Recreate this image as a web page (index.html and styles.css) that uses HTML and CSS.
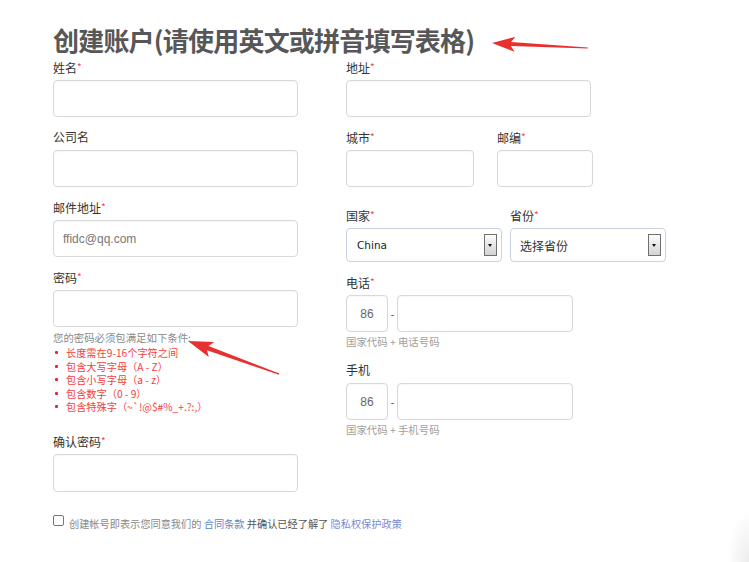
FILE: index.html
```html
<!DOCTYPE html>
<html lang="zh">
<head>
<meta charset="utf-8">
<title>创建账户</title>
<link rel="stylesheet" href="styles.css">
</head>
<body>
<div class="page">
  <h1 class="title">创建账户(请使用英文或拼音填写表格)</h1>
  <div class="cols">
    <div class="col col-left">
      <div class="field">
        <label class="lbl">姓名<i>*</i></label>
        <div class="inp w245"></div>
      </div>
      <div class="field">
        <label class="lbl">公司名</label>
        <div class="inp w245"></div>
      </div>
      <div class="field">
        <label class="lbl">邮件地址<i>*</i></label>
        <div class="inp w245 val">ffidc@qq.com</div>
      </div>
      <div class="field pw">
        <label class="lbl">密码<i>*</i></label>
        <div class="inp w245"></div>
        <div class="pw-hint">您的密码必须包满足如下条件:</div>
        <ul class="rules">
          <li>长度需在9-16个字符之间</li>
          <li>包含大写字母（A - Z）</li>
          <li>包含小写字母（a - z）</li>
          <li>包含数字（0 - 9）</li>
          <li>包含特殊字（~`!@$#%_+.?:,）</li>
        </ul>
      </div>
      <div class="field confirm">
        <label class="lbl">确认密码<i>*</i></label>
        <div class="inp w245 tall"></div>
      </div>
    </div>
    <div class="col col-right">
      <div class="field">
        <label class="lbl">地址<i>*</i></label>
        <div class="inp w245"></div>
      </div>
      <div class="row row-city">
        <div class="field">
          <label class="lbl">城市<i>*</i></label>
          <div class="inp w128"></div>
        </div>
        <div class="field">
          <label class="lbl">邮编<i>*</i></label>
          <div class="inp w96"></div>
        </div>
      </div>
      <div class="row row-country">
        <div class="field">
          <label class="lbl">国家<i>*</i></label>
          <div class="sel"><span class="sel-text latin">China</span><span class="sel-btn"></span></div>
        </div>
        <div class="field">
          <label class="lbl">省份<i>*</i></label>
          <div class="sel"><span class="sel-text">选择省份</span><span class="sel-btn"></span></div>
        </div>
      </div>
      <div class="field phone">
        <label class="lbl">电话<i>*</i></label>
        <div class="tel">
          <div class="inp code">86</div>
          <span class="dash">-</span>
          <div class="inp w176"></div>
        </div>
        <div class="sub-hint">国家代码 + 电话号码</div>
      </div>
      <div class="field phone mobile">
        <label class="lbl">手机</label>
        <div class="tel">
          <div class="inp code">86</div>
          <span class="dash">-</span>
          <div class="inp w176"></div>
        </div>
        <div class="sub-hint">国家代码 + 手机号码</div>
      </div>
    </div>
  </div>
  <div class="agree">
    <span class="check"></span>
    <span class="agree-text">创建帐号即表示您同意我们的 <a class="lnk">合同条款</a> <span class="dark">并确认已经了解了</span> <a class="lnk lnk2">隐私权保护政策</a></span>
  </div>
  <svg class="arrows" width="749" height="562" viewBox="0 0 749 562">
    <polygon fill="#e8312f" transform="translate(492,43) rotate(3)" points="0,0 23,-7.5 19,-2 96,-0.6 96,0.6 19,2 23,7.5"/>
    <polygon fill="#e8312f" transform="translate(188,341) rotate(20)" points="0,0 25,-8 21,-2.2 97,-0.6 97,0.6 21,2.2 25,8"/>
  </svg>
</div>
</body>
</html>
```

FILE: styles.css
```css
* { box-sizing: border-box; }
html, body { margin: 0; padding: 0; }
body {
  width: 749px;
  height: 562px;
  overflow: hidden;
  background: radial-gradient(ellipse 22px 50px at 100% 100%, #ececec 0%, rgba(255,255,255,0) 100%), #fff;
  font-family: "Noto Sans CJK SC", "Noto Sans", sans-serif;
  color: #333;
}
.page {
  position: relative;
  width: 749px;
  height: 562px;
  padding-left: 53px;
}
.title {
  margin: 0;
  padding-top: 22px;
  height: 58px;
  font-size: 26px;
  line-height: 36px;
  font-weight: 700;
  color: #575757;
  letter-spacing: -0.8px;
}
.cols {
  display: flex;
  gap: 48px;
}
.col { display: flex; flex-direction: column; }
.col-left { width: 245px; }
.field { display: flex; flex-direction: column; }
.col-left > .field + .field { margin-top: 11px; }
.lbl {
  font-size: 12px;
  line-height: 18px;
  height: 18px;
  margin-bottom: 4px;
  color: #333;
}
.lbl i {
  font-style: normal;
  color: #f0454a;
  font-size: 10px;
  vertical-align: 2px;
}
.inp {
  height: 37px;
  border: 1px solid #d8d8d8;
  border-radius: 4px;
  background: #fff;
  box-shadow: inset 0 1px 2px rgba(0,0,0,0.04);
}
.inp.tall { height: 38px; }
.w245 { width: 245px; }
.w128 { width: 128px; }
.w96 { width: 96px; }
.w176 { width: 176px; }
.val {
  font-family: "Liberation Sans", Arial, sans-serif;
  font-size: 12px;
  color: #777;
  display: flex;
  align-items: center;
  padding-left: 9px;
  padding-top: 1px;
}
.pw-hint {
  margin-top: 4px;
  font-size: 10.4px;
  line-height: 14px;
  color: #8a8a8a;
}
.rules {
  list-style: none;
  margin: 0;
  padding: 1px 0 0 13px;
}
.rules li {
  position: relative;
  font-size: 10.2px;
  line-height: 13.5px;
  color: #f2413f;
}
.rules li::before {
  content: "";
  position: absolute;
  left: -11px;
  top: 5px;
  width: 3px;
  height: 3px;
  background: #e8252a;
  border-radius: 1px;
}
.col-left > .field.confirm { margin-top: 18px; }

.row { display: flex; }
.row-city { margin-top: 11px; gap: 23px; }
.row-country { margin-top: 19px; gap: 8px; }
.sel {
  position: relative;
  width: 156px;
  height: 34px;
  border: 1px solid #c8d2e2;
  border-radius: 4px;
  background: #fff;
  display: flex;
  align-items: center;
  padding-left: 9px;
}
.sel-text {
  font-size: 12px;
  color: #333;
}
.sel-text.latin {
  font-family: "DejaVu Sans", Verdana, sans-serif;
  font-size: 10.5px;
  color: #222;
  padding-left: 1px;
}
.sel-btn {
  position: absolute;
  right: 4px;
  top: 5px;
  width: 13px;
  height: 22px;
  border: 1px solid #6f6f6f;
  background: linear-gradient(#fdfdfd, #d2d2d2);
}
.sel-btn::after {
  content: "";
  position: absolute;
  left: 3px;
  top: 9px;
  border-left: 2.5px solid transparent;
  border-right: 2.5px solid transparent;
  border-top: 3px solid #111;
}
.phone { margin-top: 11px; }
.phone.mobile { margin-top: 12px; }
.tel { display: flex; align-items: center; }
.code {
  width: 42px;
  display: flex;
  align-items: center;
  justify-content: center;
  font-family: "Liberation Sans", Arial, sans-serif;
  font-size: 12px;
  color: #666;
}
.dash {
  width: 9px;
  text-align: center;
  font-family: "Liberation Sans", Arial, sans-serif;
  font-size: 11px;
  color: #555;
}
.sub-hint {
  margin-top: 3px;
  font-size: 10.4px;
  line-height: 14px;
  color: #a0a0a0;
}
.agree {
  display: flex;
  align-items: center;
  margin-top: 22px;
  height: 16px;
}
.check {
  width: 11px;
  height: 11px;
  border: 1px solid #777;
  border-radius: 2px;
  background: #fff;
  margin-top: -3px;
}
.agree-text {
  margin-left: 5px;
  font-size: 10.2px;
  line-height: 14px;
  color: #888;
  margin-top: 4px;
}
.agree-text .dark { color: #555; }
.lnk { color: #5b86c8; text-decoration: none; }
.lnk2 { color: #7a8ad6; }
.arrows {
  position: absolute;
  left: 0;
  top: 0;
  pointer-events: none;
}
```
